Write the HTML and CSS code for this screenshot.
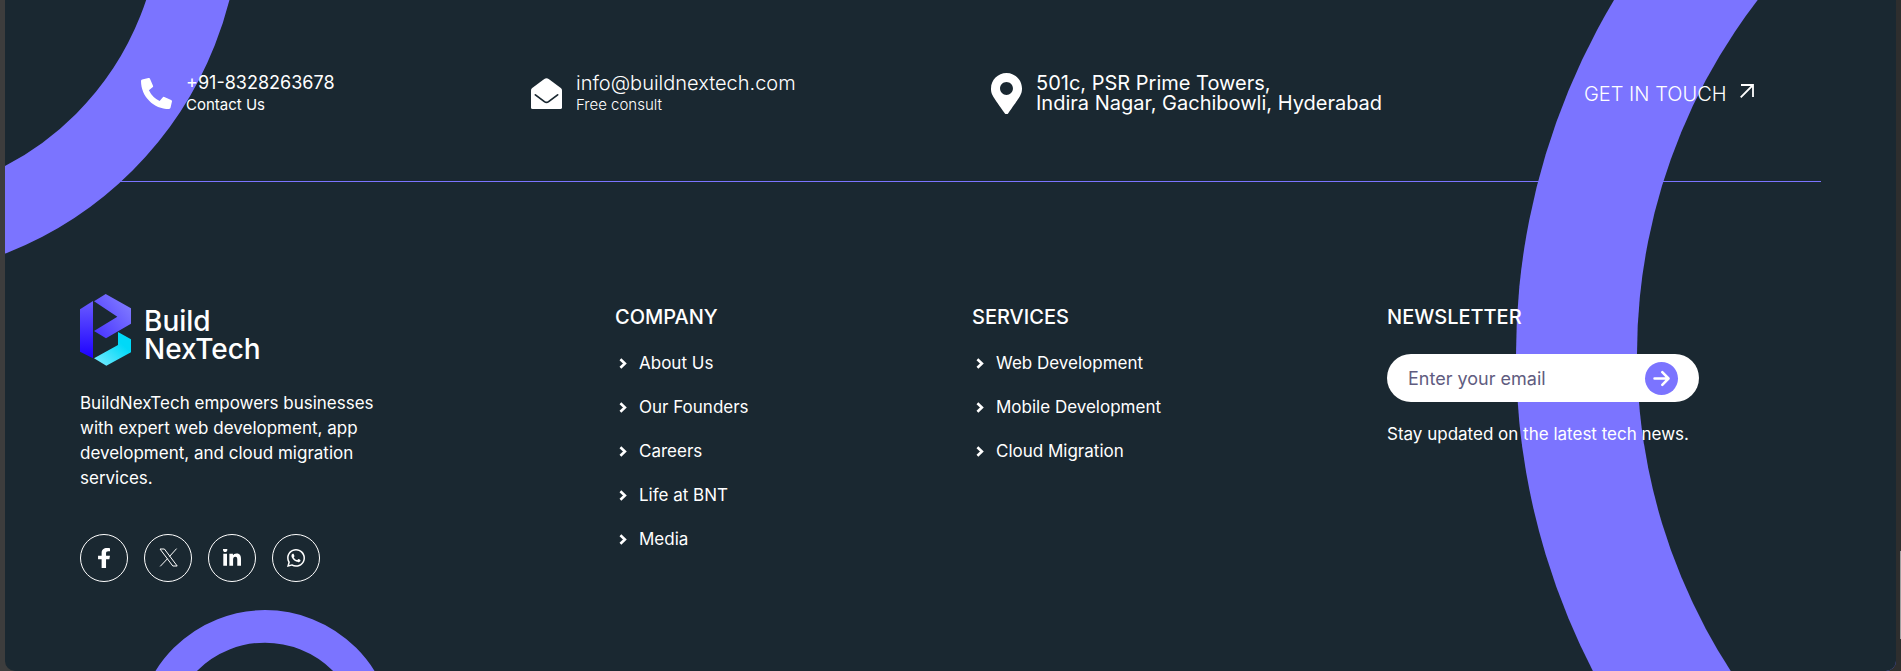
FILE: index.html
```html
<!DOCTYPE html>
<html lang="en">
<head>
<meta charset="utf-8">
<meta name="viewport" content="width=device-width, initial-scale=1">
<title>BuildNexTech</title>
<link rel="stylesheet" href="styles.css">
</head>
<body>
<footer class="footer">
  <svg class="ring ring-left" viewBox="0 0 230 280" aria-hidden="true"><circle cx="-133.5" cy="-90.6" r="329.2" fill="none" stroke="#7b74ff" stroke-width="80"/></svg>
  <svg class="ring ring-bottom" viewBox="0 0 258 61" aria-hidden="true"><circle cx="129" cy="129" r="112.6" fill="none" stroke="#7b74ff" stroke-width="32.6"/></svg>
  <svg class="ring ring-right" viewBox="0 0 380 671" aria-hidden="true"><circle cx="690" cy="354.5" r="690" fill="#7b74ff"/><circle cx="702" cy="354.5" r="581" fill="#1a2831"/></svg>

  <section class="contact" aria-label="Contact">
    <div class="contact-item">
      <svg class="contact-icon" viewBox="0 0 512 512" aria-hidden="true"><path fill="currentColor" d="M497.39 361.8l-112-48a24 24 0 0 0-28 6.9l-49.6 60.6A370.66 370.66 0 0 1 130.6 204.11l60.6-49.6a23.94 23.94 0 0 0 6.9-28l-48-112A24.16 24.16 0 0 0 122.6.61l-104 24A24 24 0 0 0 0 48c0 256.5 207.9 464 464 464a24 24 0 0 0 23.4-18.6l24-104a24.29 24.29 0 0 0-14.01-27.6z"/></svg>
      <div class="contact-text"><a class="phone" href="tel:+918328263678">+91-8328263678</a><span class="contact-note">Contact Us</span></div>
    </div>
    <div class="contact-item">
      <svg class="contact-icon" viewBox="0 0 31 31" aria-hidden="true"><path fill="currentColor" d="M0 12.2Q0 10.8 1.2 9.9L13.3 1Q15.5-.6 17.7 1L29.8 9.9Q31 10.8 31 12.2V29.4Q31 31 29.4 31H1.600Q0 31 0 29.4z"/><path fill="none" stroke="#1a2831" stroke-width="1.8" stroke-linecap="round" stroke-linejoin="round" d="M4.4 16.9L13.4 23.6Q15.5 25.2 17.6 23.6L26.6 16.9"/></svg>
      <div class="contact-text"><a href="mailto:info@buildnextech.com">info@buildnextech.com</a><span class="contact-note light">Free consult</span></div>
    </div>
    <div class="contact-item">
      <svg class="contact-icon pin" viewBox="0 0 384 512" aria-hidden="true"><path fill="currentColor" d="M172.268 501.67C26.97 291.031 0 269.413 0 192 0 85.961 85.961 0 192 0s192 85.961 192 192c0 77.413-26.97 99.031-172.268 309.67-9.535 13.774-29.93 13.773-39.464 0zM192 272c44.183 0 80-35.817 80-80s-35.817-80-80-80-80 35.817-80 80 35.817 80 80 80z"/></svg>
      <address class="contact-address">501c, PSR Prime Towers,<br>Indira Nagar, Gachibowli, Hyderabad</address>
    </div>
    <a class="touch" href="#contact">GET IN TOUCH
      <svg class="touch-arrow" viewBox="0 0 14 14" aria-hidden="true"><path fill="none" stroke="currentColor" stroke-width="1.8" d="M1 1H13V13M13 1L.7 13.3"/></svg>
    </a>
  </section>

  <section class="columns">
    <div class="brand">
      <a class="logo" href="#home">
        <svg class="logo-mark" viewBox="60 72 153 215" aria-hidden="true">
          <defs>
            <linearGradient id="stem" x1="0" y1="0" x2="0" y2="1"><stop offset="0" stop-color="#6a5cff"/><stop offset="1" stop-color="#1c00ff"/></linearGradient>
            <linearGradient id="bowl" x1="1" y1="0" x2="0" y2="1"><stop offset=".2" stop-color="#7b74ff"/><stop offset="1" stop-color="#4530ff"/></linearGradient>
            <linearGradient id="base" x1="1" y1="0" x2="0" y2="1"><stop offset=".3" stop-color="#00d9f8"/><stop offset="1" stop-color="#80ecff"/></linearGradient>
          </defs>
          <path fill="url(#stem)" d="M60 118L99 93V265L60 245z"/>
          <path fill="url(#bowl)" d="M102 94L137 72L213 115V161L138 205L102 183L172 140z"/>
          <path fill="url(#base)" d="M174 186L213 208V247L139 287L102 265L174 225z"/>
        </svg>
        <span class="logo-name">Build<br>NexTech</span>
      </a>
      <p class="about">BuildNexTech empowers businesses with expert web development, app development, and cloud migration services.</p>
      <div class="social">
        <a href="#facebook" aria-label="Facebook"><svg width="12" height="20" viewBox="22 0 272 512" preserveAspectRatio="none"><path fill="currentColor" d="M279.14 288l14.22-92.66h-88.91v-60.13c0-25.35 12.42-50.06 52.24-50.06h40.42V6.260S260.430 0 225.360 0c-73.220 0-121.080 44.380-121.080 124.720v70.620H22.890V288h81.390v224h100.170V288z"/></svg></a>
        <a href="#x" aria-label="X"><svg width="19" height="19" viewBox="0 0 19 19"><path fill="none" stroke="currentColor" stroke-width="1" d="M1 1H5.400L18.200 18H13.800zM17.600 .6L10.400 8.600M8.600 10.600L1.200 18.400"/></svg></a>
        <a href="#linkedin" aria-label="LinkedIn"><svg width="18" height="18" viewBox="0 0 448 448"><path fill="currentColor" d="M100.280 416H7.400V116.900h92.880zM53.790 76.100C24.090 76.100 0 51.500 0 21.800a53.790 53.790 0 0 1 107.580 0c0 29.700-24.100 54.300-53.790 54.300zM447.900 416h-92.680V270.400c0-34.700-.7-79.200-48.290-79.200-48.290 0-55.690 37.700-55.690 76.700V416h-92.780V116.900h89.080v40.800h1.300c12.400-23.500 42.690-48.300 87.880-48.300 94 0 111.280 61.900 111.280 142.300V416z"/></svg></a>
        <a href="#whatsapp" aria-label="WhatsApp"><svg width="18" height="18" viewBox="0 32 448 448"><path fill="currentColor" d="M380.900 97.100C339 55.100 283.200 32 223.900 32c-122.400 0-222 99.600-222 222 0 39.100 10.200 77.300 29.600 111L0 480l117.700-30.900c32.400 17.700 68.900 27 106.100 27h.1c122.300 0 224.100-99.600 224.100-222 0-59.300-25.200-115-67.100-157zm-157 341.600c-33.200 0-65.700-8.900-94-25.700l-6.700-4-69.800 18.300L72 359.200l-4.400-7c-18.500-29.400-28.200-63.300-28.200-98.200 0-101.700 82.800-184.500 184.600-184.500 49.300 0 95.600 19.200 130.400 54.100 34.800 34.900 56.200 81.200 56.100 130.500 0 101.800-84.900 184.600-186.600 184.600zm101.200-138.200c-5.500-2.800-32.800-16.200-37.900-18-5.100-1.900-8.800-2.800-12.500 2.800-3.700 5.600-14.300 18-17.600 21.800-3.200 3.700-6.500 4.200-12 1.400-32.600-16.300-54-29.100-75.500-66-5.700-9.800 5.700-9.100 16.300-30.300 1.800-3.700.9-6.900-.5-9.700-1.400-2.800-12.500-30.100-17.100-41.200-4.500-10.800-9.100-9.300-12.500-9.500-3.200-.2-6.900-.2-10.600-.2-3.700 0-9.700 1.400-14.800 6.900-5.100 5.600-19.400 19-19.400 46.300 0 27.300 19.900 53.700 22.600 57.400 2.800 3.700 39.100 59.700 94.800 83.800 35.200 15.200 49 16.500 66.600 13.900 10.700-1.600 32.800-13.400 37.400-26.400 4.600-13 4.600-24.100 3.200-26.400-1.300-2.500-5-3.900-10.500-6.600z"/></svg></a>
      </div>
    </div>

    <nav class="links" aria-labelledby="company">
      <h2 id="company">COMPANY</h2>
      <ul>
        <li><a href="#about"><svg class="chevron" viewBox="0 0 8 11" aria-hidden="true"><path d="M1.400 1.200L5.900 5.500L1.400 9.800"/></svg>About Us</a></li>
        <li><a href="#founders"><svg class="chevron" viewBox="0 0 8 11" aria-hidden="true"><path d="M1.400 1.200L5.900 5.500L1.400 9.800"/></svg>Our Founders</a></li>
        <li><a href="#careers"><svg class="chevron" viewBox="0 0 8 11" aria-hidden="true"><path d="M1.400 1.200L5.900 5.500L1.400 9.800"/></svg>Careers</a></li>
        <li><a href="#life"><svg class="chevron" viewBox="0 0 8 11" aria-hidden="true"><path d="M1.400 1.200L5.900 5.500L1.400 9.800"/></svg>Life at BNT</a></li>
        <li><a href="#media"><svg class="chevron" viewBox="0 0 8 11" aria-hidden="true"><path d="M1.400 1.200L5.900 5.500L1.400 9.800"/></svg>Media</a></li>
      </ul>
    </nav>

    <nav class="links" aria-labelledby="services">
      <h2 id="services">SERVICES</h2>
      <ul>
        <li><a href="#web"><svg class="chevron" viewBox="0 0 8 11" aria-hidden="true"><path d="M1.400 1.200L5.900 5.500L1.400 9.800"/></svg>Web Development</a></li>
        <li><a href="#mobile"><svg class="chevron" viewBox="0 0 8 11" aria-hidden="true"><path d="M1.400 1.200L5.900 5.500L1.400 9.800"/></svg>Mobile Development</a></li>
        <li><a href="#cloud"><svg class="chevron" viewBox="0 0 8 11" aria-hidden="true"><path d="M1.400 1.200L5.900 5.500L1.400 9.800"/></svg>Cloud Migration</a></li>
      </ul>
    </nav>

    <div class="newsletter">
      <h2 id="newsletter">NEWSLETTER</h2>
      <form class="subscribe">
        <input type="email" placeholder="Enter your email" aria-labelledby="newsletter">
        <button type="button" aria-label="Subscribe"><svg width="17" height="17" viewBox="0 0 17 17"><path fill="none" stroke="currentColor" stroke-width="2.500" stroke-linecap="round" stroke-linejoin="round" d="M1.500 8.500H15.200M9.300 2.200L15.500 8.500L9.300 14.800"/></svg></button>
      </form>
      <p>Stay updated on the latest tech news.</p>
    </div>
  </section>
</footer>
<div class="scroll-thumb" aria-hidden="true"></div>
</body>
</html>
```
FILE: styles.css
```css
* {
  box-sizing: border-box;
}

body {
  margin: 0;
  min-height: 100vh;
  padding: 0 5px;
  background: linear-gradient(90deg, #3d3d3d 50%, #2e2e2e 50%);
  color: #fff;
  font-family: Inter, "Open Sans", sans-serif;
  font-size: 17px;
  font-weight: 400;
}

a {
  color: inherit;
  text-decoration: none;
}

svg {
  display: block;
  flex: none;
}

.footer {
  position: relative;
  min-height: 100vh;
  overflow: hidden;
  padding: 0 75px;
  background: #1a2831;
  border-radius: 0 0 10px 10px;
}

.ring {
  position: absolute;
}

.ring-left {
  top: 0;
  left: 0;
  width: 230px;
}

.ring-bottom {
  bottom: 0;
  left: 131px;
  width: 258px;
}

.ring-right {
  top: 0;
  right: 0;
  width: 380px;
}

/* Contact bar */

.contact {
  position: relative;
  display: grid;
  grid-template-columns: 390fr 460fr 593fr 170fr;
  align-items: center;
  height: 182px;
  padding: 6px 67px 0 61px;
  border-bottom: 1px solid #7b74ff;
}

.contact-item {
  display: flex;
  align-items: center;
  gap: 14px;
  font-size: 20px;
  font-weight: 300;
  line-height: 20px;
}

.contact-icon {
  width: 31px;
}

.contact-text {
  display: flex;
  flex-direction: column;
  gap: 2px;
}

.phone {
  font-size: 18px;
  font-weight: 400;
}

.contact-note {
  font-size: 15px;
  font-weight: 400;
}

.contact-note.light {
  font-weight: 300;
}

.contact-address {
  font-style: normal;
  font-weight: 400;
}

.touch {
  display: flex;
  justify-content: space-between;
  font-size: 20px;
  font-weight: 300;
  line-height: 20px;
}

.touch-arrow {
  width: 14px;
  height: 14px;
}

/* Link columns */

.columns {
  position: relative;
  display: grid;
  grid-template-columns: 535fr 357fr 415fr 434fr;
  padding: 112px 0 80px;
}

.logo {
  display: flex;
  align-items: center;
  gap: 13px;
}

.logo-mark {
  width: 51px;
}

.logo-name {
  padding-top: 10px;
  font-size: 28px;
  font-weight: 500;
  line-height: 28px;
}

.about {
  width: 304px;
  margin: 25px 0 43px;
  line-height: 25px;
}

.social {
  display: flex;
  gap: 16px;
}

.social a {
  display: grid;
  place-items: center;
  width: 48px;
  height: 48px;
  border: 1px solid #fff;
  border-radius: 50%;
}

h2 {
  margin: 0;
  padding-top: 11px;
  font-size: 20px;
  font-weight: 500;
  line-height: 24px;
}

ul {
  display: grid;
  gap: 20px;
  margin: 22px 0 0;
  padding: 0;
  list-style: none;
}

.links a {
  display: flex;
  align-items: center;
  gap: 12px;
  padding-left: 4px;
  line-height: 24px;
}

.chevron {
  width: 8px;
  fill: none;
  stroke: currentColor;
  stroke-width: 2.6;
}

.subscribe {
  display: flex;
  align-items: center;
  width: 312px;
  height: 48px;
  margin-top: 25px;
  padding: 0 21px;
  border-radius: 24px;
  background: #fff;
}

.subscribe input {
  flex: 1;
  min-width: 0;
  padding: 0;
  border: 0;
  outline: 0;
  background: none;
  color: #1a2831;
  font: inherit;
  font-size: 18px;
}

.subscribe input::placeholder {
  color: #5f5c80;
  opacity: 1;
}

.subscribe button {
  display: grid;
  place-items: center;
  width: 33px;
  height: 33px;
  padding: 0;
  border: 0;
  border-radius: 50%;
  background: #7b74ff;
  color: #fff;
}

.newsletter p {
  margin: 20px 0 0;
  line-height: 24px;
  white-space: nowrap;
}

.scroll-thumb {
  position: absolute;
  right: 0;
  bottom: 32px;
  width: 1px;
  height: 88px;
  background: #9f9f9f;
}
```
